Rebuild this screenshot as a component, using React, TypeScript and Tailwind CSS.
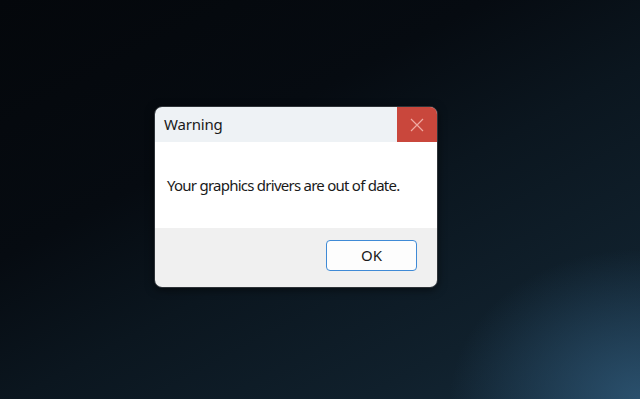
import React from "react";

export default function App() {
  return (
    <div
      className="w-[640px] h-[399px] overflow-hidden pl-[154px] pt-[106px]"
      style={{
        background:
          "radial-gradient(ellipse 190px 150px at 640px 399px, rgba(48,90,122,0.8), rgba(48,90,122,0) 100%), linear-gradient(152deg, #04070b 0%, #060b11 35%, #0b161f 55%, #10202c 80%, #152a3a 100%)",
        fontFamily: '"Noto Sans", "Open Sans", sans-serif',
      }}
    >
      <div className="w-[284px] h-[182px] rounded-[8px] border border-[#2e3338] overflow-hidden flex flex-col shadow-[0_2px_8px_rgba(0,0,0,0.5)]">
        <div className="h-[35px] flex bg-[#eef2f5]">
          <div className="flex-1 flex items-center pl-[9px] text-[15px] text-[#1a1a1a] tracking-[-0.2px]">Warning</div>
          <div className="w-[40px] h-[35px] bg-[#c9473c] flex items-center justify-center">
            <svg width="14" height="14" viewBox="0 0 14 14">
              <path d="M1 1 L13 13 M13 1 L1 13" stroke="#f0aaa2" strokeWidth="1.2" fill="none" />
            </svg>
          </div>
        </div>
        <div className="h-[86px] bg-white flex items-center pl-[12px] text-[15px] text-[#1a1a1a] tracking-[-0.75px]">
          Your graphics drivers are out of date.
        </div>
        <div className="flex-1 bg-[#f0f0f0] flex items-start justify-end pt-[12px] pr-[20px]">
          <div className="w-[91px] h-[31px] rounded-[4px] border-[1.5px] border-[#3f8ad6] bg-[#fdfdfd] flex items-center justify-center text-[15px] text-[#1a1a1a]">
            OK
          </div>
        </div>
      </div>
    </div>
  );
}
